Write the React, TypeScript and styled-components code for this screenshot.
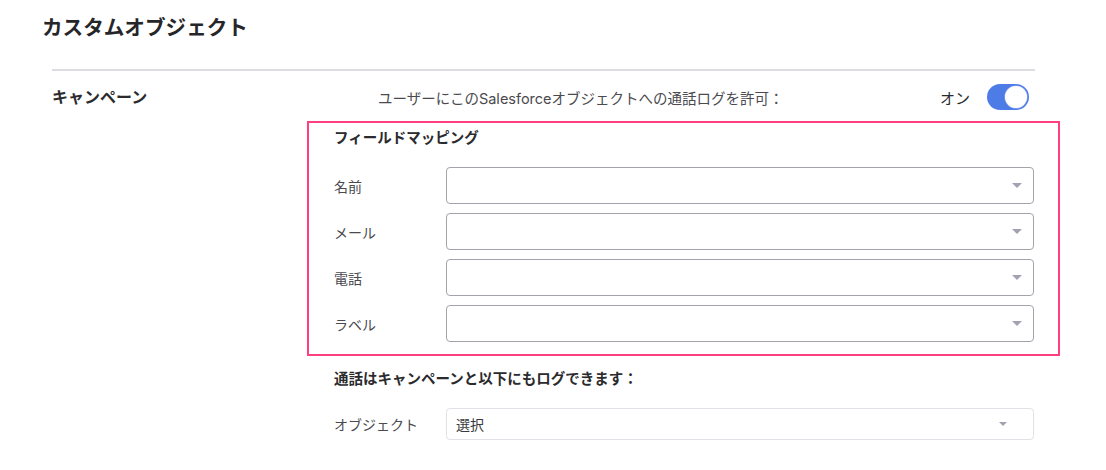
import React from 'react'
import styled, { createGlobalStyle } from 'styled-components'

const GlobalStyle = createGlobalStyle`
  html, body {
    margin: 0;
    padding: 0;
    background: #fff;
  }
  body {
    font-family: Inter, "Noto Sans CJK JP", sans-serif;
    color: #2b2b2e;
  }
`

const Page = styled.div`
  width: 1106px;
  height: 470px;
  padding: 16px 0 0 42px;
  box-sizing: border-box;
  overflow: hidden;
`

const Title = styled.h2`
  margin: 0;
  font-size: 20.6px;
  line-height: 24px;
  font-weight: 700;
  color: #262629;
`

const Divider = styled.div`
  margin: 29px 0 0 10px;
  width: 983px;
  height: 2px;
  background: #dcdce1;
`

const Body = styled.div`
  display: grid;
  grid-template-columns: 255px 753px;
  margin-left: 10px;
`

const SectionName = styled.div`
  font-size: 16px;
  font-weight: 700;
  line-height: 26px;
  margin-top: 13px;
  color: #2b2b2e;
`

const Column = styled.div`
  display: flex;
  flex-direction: column;
`

const HeaderRow = styled.div`
  display: flex;
  align-items: center;
  height: 26px;
  margin: 13px 0 11px;
  padding: 0 31px 0 71px;
`

const Description = styled.span`
  flex: 1;
  font-size: 14.5px;
  color: #4a4a4f;
`

const SwitchGroup = styled.div`
  display: flex;
  align-items: center;
  gap: 17px;
  font-size: 15px;
  color: #2b2b2e;
`

const Switch = styled.div<{ $on: boolean }>`
  width: 42px;
  height: 26px;
  border-radius: 13px;
  background: ${p => (p.$on ? '#4e7ce7' : '#c8c8ce')};
  display: flex;
  align-items: center;
  justify-content: ${p => (p.$on ? 'flex-end' : 'flex-start')};
  padding: 2px;
  box-sizing: border-box;
`

const Knob = styled.div`
  width: 22px;
  height: 22px;
  border-radius: 50%;
  background: #fff;
  box-shadow: 0 0 0 0.5px #9fb6ee;
`

const MappingBox = styled.div`
  border: 2px solid #ff3f7f;
  padding: 5px 24px 12px 25px;
`

const SubHeading = styled.div<{ $gap: number }>`
  font-size: 14.5px;
  font-weight: 700;
  line-height: 20px;
  color: #2b2b2e;
  margin-bottom: ${p => p.$gap}px;
`

const FieldList = styled.div`
  display: flex;
  flex-direction: column;
  gap: 9px;
`

const FieldRow = styled.div`
  display: grid;
  grid-template-columns: 112px 1fr;
  align-items: center;
`

const FieldLabel = styled.span`
  font-size: 14px;
  color: #4a4a4f;
`

const Select = styled.div<{ $muted?: boolean }>`
  height: ${p => (p.$muted ? 32 : 37)}px;
  box-sizing: border-box;
  border: 1px solid ${p => (p.$muted ? '#e1e1e7' : '#a3a3ab')};
  border-radius: 4px;
  display: flex;
  align-items: center;
  justify-content: space-between;
  padding: 0 ${p => (p.$muted ? 26 : 11)}px 0 9px;
  font-size: 14px;
  color: #3a3a3e;
`

const Caret = styled.span<{ $size: number }>`
  width: 0;
  height: 0;
  border-left: ${p => p.$size / 2}px solid transparent;
  border-right: ${p => p.$size / 2}px solid transparent;
  border-top: ${p => p.$size / 2}px solid #a2a2b2;
`

const Extra = styled.div`
  padding: 13px 26px 0 27px;
`

const fields = ['名前', 'メール', '電話', 'ラベル']

export default function App() {
  return (
    <>
      <GlobalStyle />
      <Page>
        <Title>カスタムオブジェクト</Title>
        <Divider />
        <Body>
          <SectionName>キャンペーン</SectionName>
          <Column>
            <HeaderRow>
              <Description>ユーザーにこのSalesforceオブジェクトへの通話ログを許可：</Description>
              <SwitchGroup>
                オン
                <Switch $on>
                  <Knob />
                </Switch>
              </SwitchGroup>
            </HeaderRow>
            <MappingBox>
              <SubHeading $gap={19}>フィールドマッピング</SubHeading>
              <FieldList>
                {fields.map(f => (
                  <FieldRow key={f}>
                    <FieldLabel>{f}</FieldLabel>
                    <Select>
                      <span />
                      <Caret $size={11} />
                    </Select>
                  </FieldRow>
                ))}
              </FieldList>
            </MappingBox>
            <Extra>
              <SubHeading $gap={19}>通話はキャンペーンと以下にもログできます：</SubHeading>
              <FieldRow>
                <FieldLabel>オブジェクト</FieldLabel>
                <Select $muted>
                  <span>選択</span>
                  <Caret $size={9} />
                </Select>
              </FieldRow>
            </Extra>
          </Column>
        </Body>
      </Page>
    </>
  )
}
